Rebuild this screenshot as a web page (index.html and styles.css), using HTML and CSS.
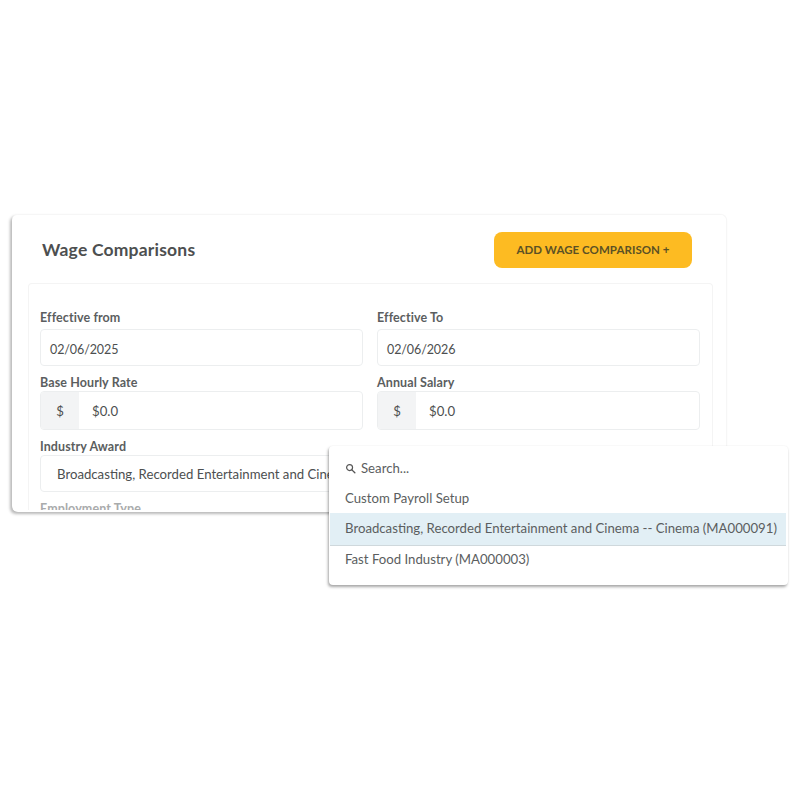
FILE: index.html
```html
<!DOCTYPE html>
<html lang="en">
<head>
  <title>Wage Comparisons</title>
  <meta charset="utf-8">
  <meta name="viewport" content="width=device-width, initial-scale=1">
  <link rel="stylesheet" href="styles.css">
</head>
<body>
  <div class="stage">
    <section class="card">
      <header class="card-head">
        <h2 class="card-title">Wage Comparisons</h2>
        <button class="add-button">ADD WAGE COMPARISON +</button>
      </header>

      <div class="panel">
        <div class="row row-dates">
          <div class="field">
            <label class="field-label">Effective from</label>
            <div class="input input-date">02/06/2025</div>
          </div>
          <div class="field">
            <label class="field-label">Effective To</label>
            <div class="input input-date">02/06/2026</div>
          </div>
        </div>

        <div class="row">
          <div class="field">
            <label class="field-label">Base Hourly Rate</label>
            <div class="input input-money">
              <span class="addon">$</span>
              <span class="money-value">$0.0</span>
            </div>
          </div>
          <div class="field">
            <label class="field-label">Annual Salary</label>
            <div class="input input-money">
              <span class="addon">$</span>
              <span class="money-value">$0.0</span>
            </div>
          </div>
        </div>

        <div class="field">
          <label class="field-label">Industry Award</label>
          <div class="input input-select">
            <span class="select-value">Broadcasting, Recorded Entertainment and Cinema -- Cinema (MA000091)</span>
          </div>
        </div>

        <div class="field">
          <label class="field-label field-label-faded">Employment Type</label>
        </div>
      </div>
    </section>

    <!-- Award dropdown, sits over the card -->
    <div class="dropdown">
      <div class="search">
        <svg class="search-icon" viewBox="0 0 24 24" width="11" height="11" aria-hidden="true">
          <circle cx="10" cy="10" r="6.5" fill="none" stroke="#555" stroke-width="2.6"/>
          <path d="M15 15l6.5 6.5" fill="none" stroke="#555" stroke-width="3" stroke-linecap="round"/>
        </svg>
        <span>Search...</span>
      </div>
      <div class="option">Custom Payroll Setup</div>
      <div class="option option-active">Broadcasting, Recorded Entertainment and Cinema -- Cinema (MA000091)</div>
      <div class="option option-last">Fast Food Industry (MA000003)</div>
    </div>
  </div>
</body>
</html>
```

FILE: styles.css
```css
html {
  height: 100%;
}

body {
  height: 100%;
  margin: 0;
  background-color: #fff;
  font-family: 'Lato', 'Noto Sans', sans-serif;
  color: #4d4f50;
  -webkit-font-smoothing: antialiased;
}

.stage {
  position: relative;
  padding: 214px 0 0 12px;
}

.card {
  width: 715px;
  height: 298px;
  box-sizing: border-box;
  overflow: hidden;
  background-color: #fff;
  border: 1px solid #f6f6f6;
  border-left: 0;
  border-bottom: 0;
  border-radius: 6px;
  box-shadow: -2px 2px 3px rgba(0,0,0,.28);
}

.card-head {
  display: flex;
  justify-content: space-between;
  align-items: center;
  height: 68px;
  padding: 0 34px 0 30px;
}

.card-title {
  margin: 0;
  font-size: 17.5px;
  font-weight: 700;
  letter-spacing: .2px;
  color: #4d4f50;
}

.add-button {
  width: 198px;
  height: 36px;
  margin-top: 2px;
  padding: 0 0 2px;
  border: 0;
  border-radius: 8px;
  background-color: #fdbb22;
  font-family: inherit;
  font-size: 11.5px;
  font-weight: 700;
  letter-spacing: .05px;
  color: #5b5125;
}

.panel {
  display: flex;
  flex-direction: column;
  height: 227px;
  box-sizing: border-box;
  overflow: hidden;
  margin: 0 13px 0 16px;
  padding: 25px 13px 0 11px;
  border: 1px solid #f4f4f4;
  border-bottom: 0;
  border-radius: 4px 4px 0 0;
}

.row {
  display: grid;
  grid-template-columns: 323px 323px;
  gap: 14px;
}

.field-label {
  display: block;
  height: 17px;
  font-size: 12.5px;
  font-weight: 700;
  line-height: 18px;
  letter-spacing: .1px;
  color: #5b5e60;
}

.row-dates .field-label {
  margin-bottom: 3px;
}

.field-label-faded {
  color: #a9abac;
}

.input {
  box-sizing: border-box;
  margin-bottom: 8px;
  border: 1px solid #eceeef;
  border-radius: 4px;
  background-color: #fff;
  font-size: 13.2px;
}

.input-date {
  height: 37px;
  padding-left: 9px;
  font-size: 12.5px;
  letter-spacing: -.1px;
  line-height: 39px;
}

.input-money {
  display: flex;
  height: 39px;
  line-height: 38px;
  overflow: hidden;
}

.addon {
  flex: none;
  width: 38px;
  text-align: center;
  background-color: #f3f4f5;
}

.money-value {
  padding-left: 13px;
}

.input-select {
  height: 37px;
  padding-left: 16px;
  line-height: 36px;
}

/* the open dropdown starts at x=329, the value stops under its edge */
.select-value {
  display: block;
  width: 272px;
  overflow: hidden;
  white-space: nowrap;
}

.dropdown {
  position: absolute;
  left: 329px;
  top: 446px;
  width: 459px;
  height: 139px;
  box-sizing: border-box;
  padding: 7px 2px 0 1px;
  background-color: #fff;
  border-radius: 4px;
  box-shadow: -1px 2px 3px rgba(0,0,0,.35), 0 0 2px rgba(0,0,0,.06);
  font-size: 13.2px;
  color: #5b5e60;
}

.search {
  display: flex;
  align-items: center;
  gap: 5px;
  height: 30px;
  padding-left: 15px;
}

.search-icon {
  flex: none;
}

.option {
  height: 30px;
  padding-left: 15px;
  line-height: 30px;
  white-space: nowrap;
}

.option-active {
  height: 33px;
  line-height: 31px;
  box-sizing: border-box;
  background-color: #e2eff5;
  border-bottom: 1px solid #cfd8dc;
}

.option-last {
  line-height: 26px;
}
```
